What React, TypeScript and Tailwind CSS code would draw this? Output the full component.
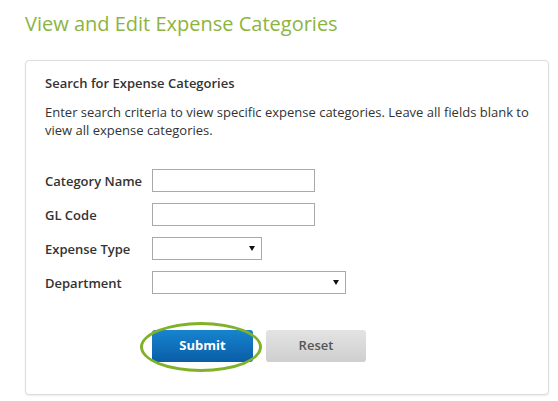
import React from "react";

const FONT = { fontFamily: '"Open Sans", "Noto Sans", Arial, sans-serif' };

function Caret() {
  return (
    <svg width="6" height="5" viewBox="0 0 6 5" className="shrink-0">
      <path d="M0 0h6L3 5z" fill="#111" />
    </svg>
  );
}

function TextBox({ width }: { width: string }) {
  return <div className={`h-[23px] ${width} border border-[#a9a9a9] bg-white`} />;
}

function SelectBox({ width }: { width: string }) {
  return (
    <div className={`flex h-[23px] ${width} items-center justify-end border border-[#a9a9a9] bg-white pr-[6px]`}>
      <Caret />
    </div>
  );
}

const FIELDS = [
  { label: "Category Name", control: <TextBox width="w-[163px]" /> },
  { label: "GL Code", control: <TextBox width="w-[163px]" /> },
  { label: "Expense Type", control: <SelectBox width="w-[110px]" /> },
  { label: "Department", control: <SelectBox width="w-[194px]" /> },
];

export default function App() {
  return (
    <div className="min-h-[401px] w-[558px] bg-white text-[#333]" style={FONT}>
      <h1 className="pl-[25px] pt-[10px] text-[20px] leading-[28px] font-normal text-[#8cb43f]">
        View and Edit Expense Categories
      </h1>

      <div className="ml-[25px] mt-[22px] w-[524px] rounded-[4px] border border-[#dcdcdc] bg-white px-[19px] pb-[32px] pt-[13px] shadow-[0_1px_2px_rgba(0,0,0,0.08)]">
        <h2 className="text-[13px] leading-[18px] font-semibold text-[#333]">
          Search for Expense Categories
        </h2>
        <p className="mt-[11px] text-[13px] leading-[18px] text-[#333]">
          Enter search criteria to view specific expense categories. Leave all fields blank to view all expense
          categories.
        </p>

        <div className="mt-[30px] flex flex-col gap-[11px]">
          {FIELDS.map((f) => (
            <div key={f.label} className="flex items-center">
              <span className="w-[107px] text-[13px] leading-[18px] font-semibold">{f.label}</span>
              {f.control}
            </div>
          ))}
        </div>

        <div className="mt-[36px] flex gap-[13px] pl-[107px]">
          <div className="relative">
            <button className="h-[32px] w-[101px] rounded-[3px] bg-gradient-to-b from-[#1784cf] to-[#0a5ea6] text-[13px] font-bold text-white">
              Submit
            </button>
            {/* highlight ring drawn over the button */}
            <div className="pointer-events-none absolute left-[-12px] top-[-8px] h-[50px] w-[122px] rounded-[50%] border-[3px] border-[#7fb228]" />
          </div>
          <button className="h-[32px] w-[100px] rounded-[3px] bg-gradient-to-b from-[#e3e3e3] to-[#cfcfcf] text-[13px] font-semibold text-[#555]">
            Reset
          </button>
        </div>
      </div>
    </div>
  );
}
